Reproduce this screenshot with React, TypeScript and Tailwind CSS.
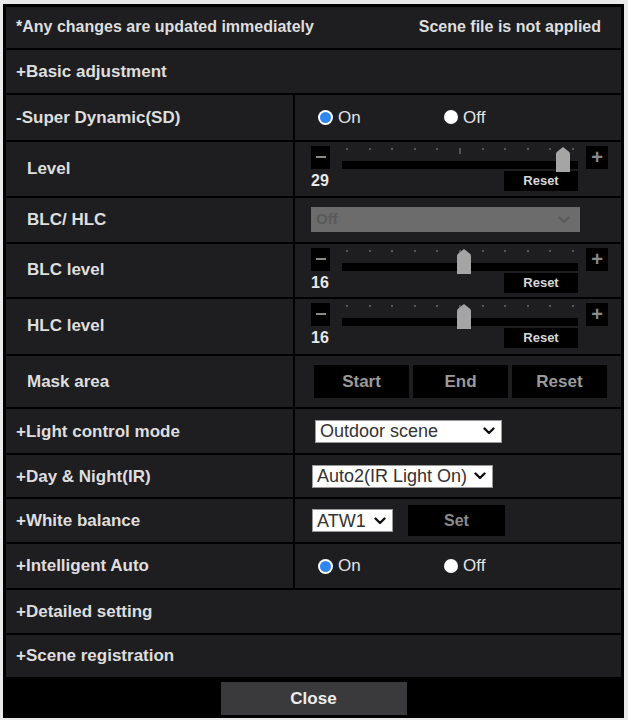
import React from 'react';

const font = { fontFamily: '"Liberation Sans", Arial, sans-serif' };

function Chevron({ className = '' }: { className?: string }) {
  return (
    <svg viewBox="0 0 12 8" className={className} width="12" height="8">
      <path d="M1.5 1.5 L6 6 L10.5 1.5" fill="none" stroke="currentColor" strokeWidth="2.4" strokeLinecap="round" strokeLinejoin="round" />
    </svg>
  );
}

function Radio({ on, label }: { on: boolean; label: string }) {
  return (
    <div className="flex items-center gap-[5px]">
      {on ? (
        <span className="w-[15px] h-[15px] rounded-full bg-white flex items-center justify-center">
          <span className="w-[11px] h-[11px] rounded-full bg-[#2f86f0]" />
        </span>
      ) : (
        <span className="w-[14px] h-[14px] rounded-full bg-white" />
      )}
      <span className="text-[17px] text-[#e4e4e4]">{label}</span>
    </div>
  );
}

function RadioPair() {
  return (
    <div className="flex items-center pl-[23px] h-full">
      <div className="w-[126px]"><Radio on label="On" /></div>
      <Radio on={false} label="Off" />
    </div>
  );
}

function Slider({ value }: { value: number }) {
  const pct = (value / 31) * 100;
  const ticks = Array.from({ length: 11 });
  return (
    <div className="pl-[16px] pr-[12px] pt-[4px]">
      <div className="flex items-start">
        <div className="w-[19px] h-[23px] bg-black flex items-center justify-center">
          <span className="block w-[10px] h-[2px] bg-[#8a8a8a]" />
        </div>
        <div className="relative ml-[12px] w-[236px] h-[26px]">
          <div className="flex justify-between px-[4px] pt-[2px]">
            {ticks.map((_, i) => (
              <span key={i} className={i === 5 ? 'block w-[2px] h-[6px] bg-[#555]' : 'block w-[2px] h-[2px] bg-[#555]'} />
            ))}
          </div>
          <div className="absolute left-0 right-0 top-[15px] h-[8px] bg-black" />
          <svg
            className="absolute top-[1px]"
            style={{ left: `calc(${pct}% - 7px)` }}
            width="14"
            height="25"
            viewBox="0 0 14 25"
          >
            <path d="M0 7 Q0 5 2 4 L7 0 L12 4 Q14 5 14 7 L14 25 L0 25 Z" fill="#a5a5a5" />
          </svg>
        </div>
        <div className="ml-[8px] w-[22px] h-[23px] bg-black flex items-center justify-center">
          <span className="text-[#8a8a8a] text-[20px] font-bold leading-none">+</span>
        </div>
      </div>
      <div className="flex items-center justify-between w-[267px]">
        <span className="text-[16px] font-bold text-[#e8e8e8] leading-none">{value}</span>
        <div className="w-[74px] h-[20px] bg-black flex items-center justify-center -mt-[1px]">
          <span className="text-[13px] font-bold text-[#d8d8d8]">Reset</span>
        </div>
      </div>
    </div>
  );
}

function Row({ h, left, right, indent = false }: { h: number; left: string; right?: React.ReactNode; indent?: boolean }) {
  return (
    <div className="flex gap-[2px]" style={{ height: h }}>
      <div className={`w-[287px] bg-[#1e1e21] flex items-center ${indent ? 'pl-[21px]' : 'pl-[10px]'}`}>
        <span className="text-[17px] font-bold text-[#dedede]">{left}</span>
      </div>
      <div className="flex-1 bg-[#1e1e21]">{right}</div>
    </div>
  );
}

function FullRow({ h, children }: { h: number; children: React.ReactNode }) {
  return (
    <div className="bg-[#1e1e21] flex items-center pl-[10px] pr-[20px]" style={{ height: h }}>
      {children}
    </div>
  );
}

function WhiteSelect({ w, text }: { w: number; text: string }) {
  return (
    <div className="h-[23px] bg-white border border-[#999] flex items-center justify-between pl-[4px] pr-[6px]" style={{ width: w }}>
      <span className="text-[18px] text-[#333] leading-none">{text}</span>
      <Chevron className="text-[#111]" />
    </div>
  );
}

export default function App() {
  return (
    <div className="h-[720px] bg-[#eaeaea] pt-[4px] pl-[3px]" style={font}>
      <div className="w-[621px] h-[714px] bg-black p-[3px] flex flex-col gap-[2px]">
        <FullRow h={41}>
          <div className="flex justify-between w-full">
            <span className="text-[16px] font-bold text-[#dedede]">*Any changes are updated immediately</span>
            <span className="text-[16px] font-bold text-[#dedede]">Scene file is not applied</span>
          </div>
        </FullRow>
        <FullRow h={43}>
          <span className="text-[17px] font-bold text-[#dedede]">+Basic adjustment</span>
        </FullRow>
        <Row h={45} left="-Super Dynamic(SD)" right={<RadioPair />} />
        <Row h={54} indent left="Level" right={<Slider value={29} />} />
        <Row
          h={44}
          indent
          left="BLC/ HLC"
          right={
            <div className="h-full flex items-center pl-[16px]">
              <div className="w-[269px] h-[25px] bg-[#6c6c6c] flex items-center justify-between pl-[5px] pr-[10px]">
                <span className="text-[15px] text-[#5a5a5a] font-bold">Off</span>
                <Chevron className="text-[#5a5a5a]" />
              </div>
            </div>
          }
        />
        <Row h={53} indent left="BLC level" right={<Slider value={16} />} />
        <Row h={55} indent left="HLC level" right={<Slider value={16} />} />
        <Row
          h={52}
          indent
          left="Mask area"
          right={
            <div className="h-full flex items-center gap-[4px] pl-[19px] pr-[10px]">
              {['Start', 'End', 'Reset'].map((t) => (
                <div key={t} className="w-[95px] h-[33px] bg-black flex items-center justify-center">
                  <span className="text-[17px] font-bold text-[#9a9a9a]">{t}</span>
                </div>
              ))}
            </div>
          }
        />
        <Row
          h={44}
          left="+Light control mode"
          right={
            <div className="h-full flex items-center pl-[20px]">
              <WhiteSelect w={187} text="Outdoor scene" />
            </div>
          }
        />
        <Row
          h={42}
          left="+Day & Night(IR)"
          right={
            <div className="h-full flex items-center pl-[17px]">
              <WhiteSelect w={181} text="Auto2(IR Light On)" />
            </div>
          }
        />
        <Row
          h={43}
          left="+White balance"
          right={
            <div className="h-full flex items-center pl-[17px] gap-[15px]">
              <WhiteSelect w={81} text="ATW1" />
              <div className="w-[97px] h-[31px] bg-black flex items-center justify-center">
                <span className="text-[16px] font-bold text-[#8a8a8a]">Set</span>
              </div>
            </div>
          }
        />
        <Row h={44} left="+Intelligent Auto" right={<RadioPair />} />
        <FullRow h={43}>
          <span className="text-[17px] font-bold text-[#dedede]">+Detailed setting</span>
        </FullRow>
        <FullRow h={42}>
          <span className="text-[17px] font-bold text-[#dedede]">+Scene registration</span>
        </FullRow>
        <div className="flex-1 flex justify-center pt-[3px]">
          <div className="w-[186px] h-[33px] bg-[#3a3a3d] flex items-center justify-center">
            <span className="text-[17px] font-bold text-[#eeeeee]">Close</span>
          </div>
        </div>
      </div>
    </div>
  );
}
